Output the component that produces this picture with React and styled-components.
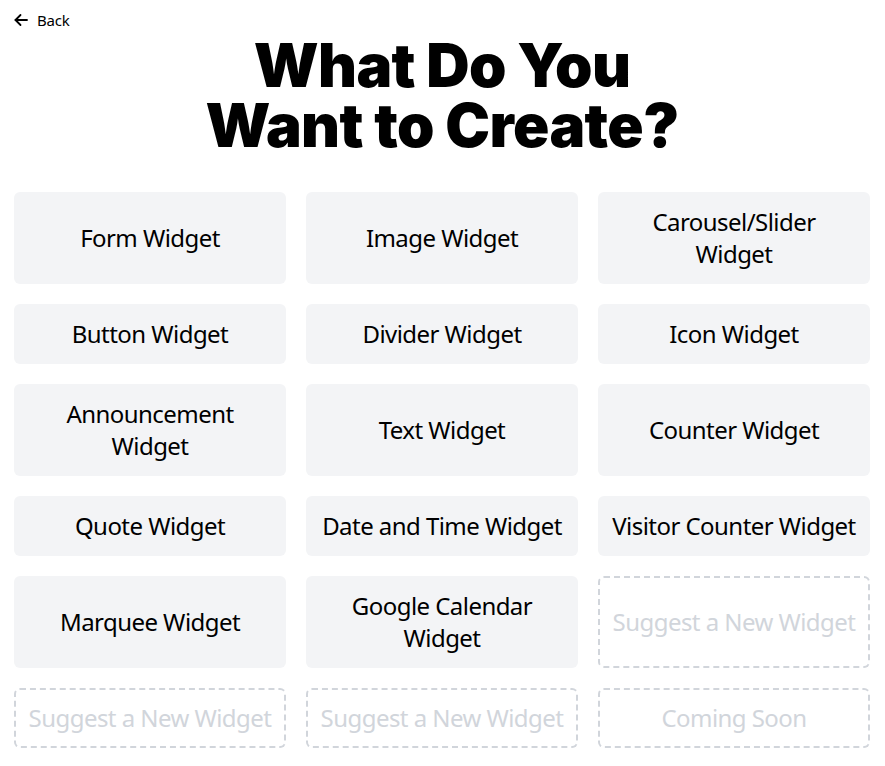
import React from 'react';
import styled, { createGlobalStyle } from 'styled-components';

const GlobalStyle = createGlobalStyle`
  html, body {
    margin: 0;
    padding: 0;
    background: #ffffff;
  }
  body {
    font-family: "Segoe UI", "Noto Sans", "Open Sans", sans-serif;
    color: #000000;
  }
`;

const Page = styled.div`
  padding: 8px 15px 14px 14px;
`;

const BackLink = styled.a`
  display: inline-flex;
  align-items: center;
  gap: 9px;
  height: 24px;
  font-size: 15px;
  letter-spacing: -0.2px;
  color: #000000;
  text-decoration: none;
  cursor: pointer;
`;

const Title = styled.h1`
  margin: 3px 0 37px;
  text-align: center;
  font-family: "Inter", "Lato", sans-serif;
  font-weight: 900;
  font-size: 60px;
  line-height: 60px;
  letter-spacing: -0.6px;
`;

const Grid = styled.div`
  display: grid;
  grid-template-columns: repeat(3, 272px);
  column-gap: 20px;
  row-gap: 20px;
`;

const Card = styled.button`
  display: flex;
  align-items: center;
  justify-content: center;
  text-align: center;
  white-space: pre-line;
  padding: 12px 8px;
  border-radius: 6px;
  border: 2px ${p => (p.$ghost ? 'dashed #d1d5db' : 'solid transparent')};
  background: ${p => (p.$ghost ? '#ffffff' : '#f3f4f6')};
  color: ${p => (p.$ghost ? '#d1d5db' : '#000000')};
  font-family: inherit;
  font-size: 24px;
  line-height: 32px;
  letter-spacing: -0.55px;
  cursor: pointer;
`;

const ArrowIcon = () => (
  <svg width="14" height="14" viewBox="0 0 14 14" fill="none" stroke="currentColor" strokeWidth="1.8" strokeLinecap="round" strokeLinejoin="round">
    <path d="M13 7H1.5" />
    <path d="M6.5 2L1.5 7l5 5" />
  </svg>
);

const widgets = [
  { label: 'Form Widget' },
  { label: 'Image Widget' },
  { label: 'Carousel/Slider\nWidget' },
  { label: 'Button Widget' },
  { label: 'Divider Widget' },
  { label: 'Icon Widget' },
  { label: 'Announcement\nWidget' },
  { label: 'Text Widget' },
  { label: 'Counter Widget' },
  { label: 'Quote Widget' },
  { label: 'Date and Time Widget' },
  { label: 'Visitor Counter Widget' },
  { label: 'Marquee Widget' },
  { label: 'Google Calendar\nWidget' },
  { label: 'Suggest a New Widget', ghost: true },
  { label: 'Suggest a New Widget', ghost: true },
  { label: 'Suggest a New Widget', ghost: true },
  { label: 'Coming Soon', ghost: true },
];

export default function App() {
  return (
    <>
      <GlobalStyle />
      <Page>
        <BackLink>
          <ArrowIcon />
          Back
        </BackLink>
        <Title>
          What Do You
          <br />
          Want to Create?
        </Title>
        <Grid>
          {widgets.map((w, i) => (
            <Card key={i} $ghost={w.ghost}>{w.label}</Card>
          ))}
        </Grid>
      </Page>
    </>
  );
}
